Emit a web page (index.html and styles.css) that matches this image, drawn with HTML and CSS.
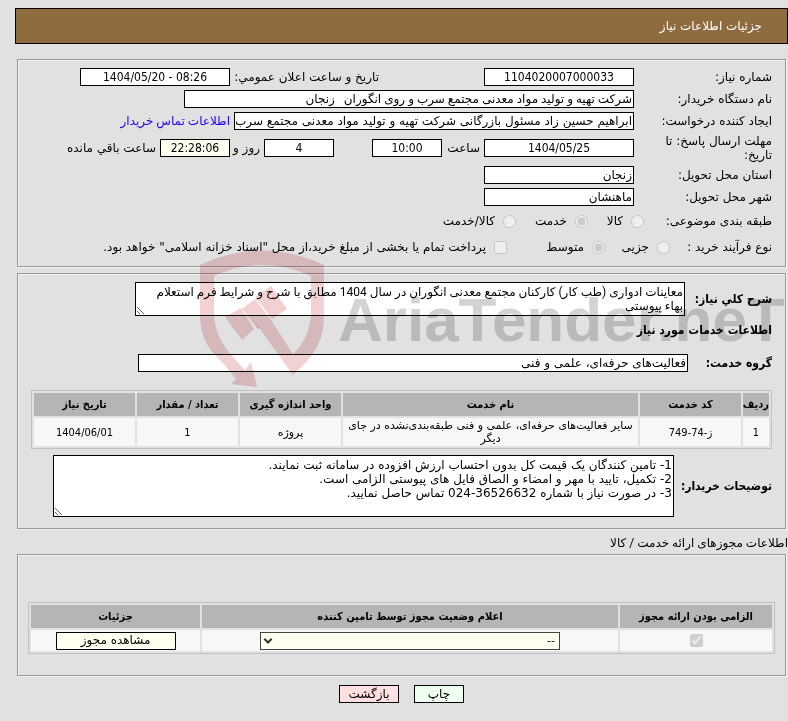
FILE: index.html
```html
<!DOCTYPE html>
<html lang="fa" dir="rtl">
<head>
<meta charset="utf-8">
<title>جزئیات اطلاعات نیاز</title>
<link rel="stylesheet" href="styles.css">
</head>
<body>
<header class="banner"><h1>جزئیات اطلاعات نیاز</h1></header>
<main>
<section class="panel request">
  <div class="row">
    <label class="name" for="num">شماره نیاز:</label>
    <input class="w150 mid" id="num" value="1104020007000033">
    <label class="announce" for="ann">تاریخ و ساعت اعلان عمومي:</label>
    <input class="w150 mid" id="ann" value="1404/05/20 - 08:26" dir="ltr">
  </div>
  <div class="row">
    <label class="name" for="org">نام دستگاه خریدار:</label>
    <input class="w450 dense" id="org" value="شرکت تهیه و تولید مواد معدنی مجتمع سرب و روی انگوران &nbsp; زنجان">
  </div>
  <div class="row">
    <label class="name" for="creator">ایجاد کننده درخواست:</label>
    <input class="w400" id="creator" value="ابراهیم حسین زاد مسئول بازرگانی شرکت تهیه و تولید مواد معدنی مجتمع سرب و روی انگوران">
    <a class="dense" href="#contact">اطلاعات تماس خریدار</a>
  </div>
  <div class="row tall">
    <label class="name" for="deadline">مهلت ارسال پاسخ: تا تاریخ:</label>
    <input class="w150 mid" id="deadline" value="1404/05/25">
    <label class="hour" for="hour">ساعت</label>
    <input class="w70 mid" id="hour" value="10:00">
    <input class="w70 mid days" id="days" value="4">
    <label class="and" for="days">روز و</label>
    <input class="w70 mid cream" id="left" value="22:28:06">
    <label for="left">ساعت باقي مانده</label>
  </div>
  <div class="row">
    <label class="name" for="state">استان محل تحویل:</label>
    <input class="w150" id="state" value="زنجان">
  </div>
  <div class="row">
    <label class="name" for="city">شهر محل تحویل:</label>
    <input class="w150" id="city" value="ماهنشان">
  </div>
  <div class="row choices">
    <span class="name">طبقه بندی موضوعی:</span>
    <input type="radio" name="cat" id="c1" disabled><label class="c1" for="c1">کالا</label>
    <input type="radio" name="cat" id="c2" disabled checked><label class="c2" for="c2">خدمت</label>
    <input type="radio" name="cat" id="c3" disabled><label for="c3">کالا/خدمت</label>
  </div>
  <div class="row choices">
    <span class="name short">نوع فرآیند خرید :</span>
    <input type="radio" name="proc" id="p1" disabled><label class="p1" for="p1">جزیی</label>
    <input type="radio" name="proc" id="p2" disabled checked><label class="p2" for="p2">متوسط</label>
    <input type="checkbox" id="bond" disabled><label for="bond">پرداخت تمام یا بخشی از مبلغ خرید،از محل "اسناد خزانه اسلامی" خواهد بود.</label>
  </div>
</section>

<section class="panel service">
  <div class="line">
    <label class="bold" for="desc">شرح کلي نیاز:</label>
    <textarea class="w550 dense" id="desc" rows="2">معاینات ادواری (طب کار) کارکنان مجتمع معدنی انگوران در سال 1404 مطابق با شرح و شرایط فرم استعلام بهاء پیوستی</textarea>
  </div>
  <h2>اطلاعات خدمات مورد نیاز</h2>
  <div class="line group">
    <label class="bold" for="grp">گروه خدمت:</label>
    <input class="w550" id="grp" value="فعالیت‌های حرفه‌ای، علمی و فنی">
  </div>
  <table class="items">
    <colgroup><col class="i1"><col class="i2"><col><col class="i2"><col class="i2"><col class="i2"></colgroup>
    <thead><tr><th>ردیف</th><th>کد خدمت</th><th>نام خدمت</th><th>واحد اندازه گیری</th><th>تعداد / مقدار</th><th>تاریخ نیاز</th></tr></thead>
    <tbody><tr><td class="num">1</td><td class="num">ز-74-749</td><td>سایر فعالیت‌های حرفه‌ای، علمی و فنی طبقه‌بندی‌نشده در جای دیگر</td><td>پروژه</td><td class="num">1</td><td class="num">1404/06/01</td></tr></tbody>
  </table>
  <div class="line">
    <label class="bold wide" for="note">توضیحات خریدار:</label>
    <textarea class="note" id="note" rows="4">1- تامین کنندگان یک قیمت کل بدون احتساب ارزش افزوده در سامانه ثبت نمایند.
2- تکمیل، تایید با مهر و امضاء و الصاق فایل های پیوستی الزامی است.
3- در صورت نیاز با شماره 36526632-024 تماس حاصل نمایید.</textarea>
  </div>
</section>

<h2 class="caption dense">اطلاعات مجوزهای ارائه خدمت / کالا</h2>
<section class="panel permits">
  <table>
    <colgroup><col class="k1"><col><col class="k3"></colgroup>
    <thead><tr><th>الزامی بودن ارائه مجوز</th><th>اعلام وضعیت مجوز توسط تامین کننده</th><th>جزئیات</th></tr></thead>
    <tbody><tr>
      <td><input type="checkbox" checked disabled aria-label="الزامی بودن ارائه مجوز"></td>
      <td><span class="select"><select aria-label="اعلام وضعیت مجوز"><option>--</option></select><svg viewBox="0 0 10 8" aria-hidden="true"><path d="M1.300 1.800L5 5.500L8.700 1.800"/></svg></span></td>
      <td><button class="view" type="button">مشاهده مجوز</button></td>
    </tr></tbody>
  </table>
</section>
<div class="actions"><button class="print" type="button">چاپ</button><button class="back" type="button">بازگشت</button></div>
</main>
<div class="watermark" dir="ltr" aria-hidden="true">
  <svg viewBox="200 240 130 150"><g fill="#ca3d46" fill-opacity=".24"><path d="M200 265Q262 236 324 265V316C324 343 312 358 293 375L255 322L258 329L271 320L293 354Q311 337 311 310V276Q262 254 214 276V312C214 339 231 355 245 370L251 362L257 387L231 384L236 379L223 363C208 349 200 338 200 312Z"/><path d="M225 317L241 308L254 329L242 340ZM242 309L255 299L271 320L258 329ZM255 297L271 286L287 309L272 319Z"/></g></svg>
  <span>AriaTender.neT</span>
</div>
</body>
</html>
```
FILE: styles.css
```css
* { box-sizing: border-box; }
body {
  margin: 8px 0 0;
  background: #e1e1e1;
  color: #000;
  font: 12px/14px "DejaVu Sans", sans-serif;
  position: relative;
}
h1, h2 { margin: 0; font-size: 12px; font-weight: normal; }
input, button, select, textarea { font: inherit; color: #000; margin: 0; }
input:not([type]), button, textarea { border: 1px solid #000; background: #fff; }
input:not([type]) { height: 18px; padding: 0 1px; }
button { height: 18px; padding: 0; }
textarea { display: block; padding: 2px 1px; resize: both; overflow: hidden; }
a { color: #2000ff; text-decoration: none; }

.banner {
  margin-left: 15px;
  height: 36px;
  padding: 0 25px;
  display: flex;
  align-items: center;
  background: #8f6c40;
  border: 1px solid #000;
  color: #fff;
}
.panel {
  margin: 0 2px 0 17px;
  border: 1px solid #999;
  box-shadow: inset 1px 1px #f2f2f2, 1px 1px #f2f2f2;
}
.request {
  margin-top: 15px;
  padding: 8px 13px 8px 0;
  display: flex;
  flex-direction: column;
  gap: 4px;
}
.row { display: flex; align-items: center; gap: 4px; height: 18px; white-space: nowrap; }
.row.tall { height: 28px; }
.name { flex: 0 0 134px; }
.tall .name { white-space: normal; padding-left: 16px; }
.w150 { width: 150px; }
.w450 { width: 450px; }
.w400 { width: 400px; }
.w550 { width: 550px; }
.w70 { width: 70px; }
input.mid, .num { text-align: center; font-family: "DejaVu Sans Condensed", "DejaVu Sans", sans-serif; }
input.cream:not([type]) { background: #fffff0; }
.announce { width: 246px; padding-right: 101px; }
.hour { width: 34px; }
.days { margin-right: 34px; }
.and { width: 26px; }
.choices { height: 22px; gap: 8px; }
.choices .name { flex-basis: 120px; }
.choices .short { flex-basis: 94px; }
input[type="radio"], input[type="checkbox"] { width: 13px; height: 13px; flex: none; }
.c1 { width: 27px; }
.c2 { width: 43px; }
.p1 { width: 36px; }
.p2 { width: 69px; }

.service {
  margin-top: 6px;
  padding: 8px 13px 11px 0;
}
.line { display: flex; align-items: center; gap: 4px; }
.bold, h2, th { font-weight: bold; font-family: "DejaVu Sans Condensed", "DejaVu Sans", sans-serif; }
.bold { flex: 0 0 83px; }
.group .bold { flex-basis: 80px; }
.wide { flex-basis: 94px; }
h2 { padding: 7px 0; }
.group { margin-top: 10px; }
.note { width: 621px; }

table {
  border: 1px solid #c0c0c0;
  border-collapse: separate;
  border-spacing: 2px;
  table-layout: fixed;
  text-align: center;
}
th { height: 23px; padding: 0; background: #b5b5b5; font-size: 11px; }
td { height: 28px; padding: 0 1px; background: #f7f7f7; font-size: 11px; line-height: 13px; }
.items { width: calc(100% - 13px); margin: 18px 0 6px; }
.i1 { width: 26px; }
.i2 { width: 101px; }

.caption { padding: 7px 0 4px; font-weight: normal; }
.dense { font-family: Roboto, "DejaVu Sans", sans-serif; }
.permits { padding: 47px 10px 21px; }
.permits table { width: 100%; }
.permits td { height: 21px; padding: 0; }
.permits td input { display: block; margin: 0 auto; }
.permits button { font-size: 12px; }
.k1 { width: 152px; }
.k3 { width: 169px; }
.select { display: block; position: relative; width: 300px; margin: 0 auto; }
.select select {
  display: block;
  appearance: none;
  width: 100%;
  height: 18px;
  padding: 0 4px;
  border: 1px solid #444;
  border-radius: 0;
  background: #fffff0;
}
.select svg { position: absolute; left: 3px; top: 5px; width: 10px; height: 8px; fill: none; stroke: #333; stroke-width: 2; }
button.view { width: 120px; background: #fffff0; }
.actions { display: flex; justify-content: center; gap: 15px; padding: 9px 0 18px; margin-left: 15px; }
button.print { width: 50px; background: #efffef; }
button.back { width: 60px; background: #ffdfdf; }

.watermark {
  position: absolute;
  left: 200px;
  top: 232px;
  width: 588px;
  height: 150px;
  display: flex;
  pointer-events: none;
  mix-blend-mode: multiply;
}
.watermark svg { width: 130px; height: 150px; flex: none; }
.watermark span {
  padding: 44px 0 0 8px;
  color: #808080;
  opacity: .35;
  font: bold 62px/72px "Liberation Sans", sans-serif;
}
```
